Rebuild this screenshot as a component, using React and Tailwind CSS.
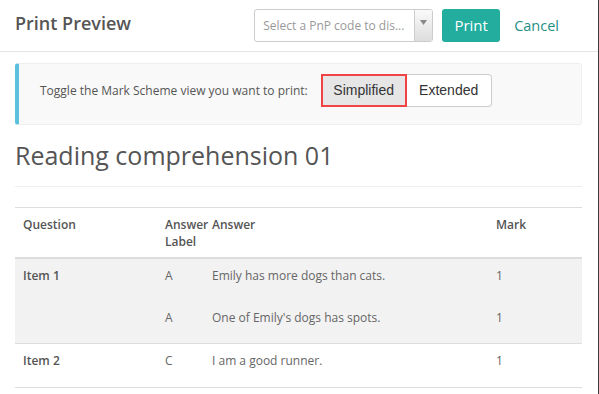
import React from 'react';

const rows = [
  { q: 'Item 1', answers: [{ label: 'A', text: 'Emily has more dogs than cats.', mark: '1' }, { label: 'A', text: "One of Emily's dogs has spots.", mark: '1' }], shaded: true },
  { q: 'Item 2', answers: [{ label: 'C', text: 'I am a good runner.', mark: '1' }], shaded: false },
];

const cols = 'grid grid-cols-[142px_47px_284px_95px]';

const App = () => {
  return (
    <div className="w-[599px] h-[394px] overflow-hidden bg-white border-r border-[#3a3a3a] text-[#555] font-['Open_Sans',sans-serif]">
      {/* Header */}
      <div className="h-[52px] border-b border-[#e5e5e5] flex items-center pl-[15px] pr-[39px]">
        <h1 className="text-[18px] font-semibold text-[#555] -mt-[4px]">Print Preview</h1>
        <div className="ml-auto flex items-center">
          <div className="w-[179px] h-[33px] border border-[#ccc] rounded-[3px] flex items-stretch overflow-hidden">
            <span className="flex-1 pl-[8px] text-[12px] text-[#999] flex items-center">Select a PnP code to dis...</span>
            <span className="w-[18px] border-l border-[#ccc] bg-gradient-to-b from-[#fafafa] to-[#ddd] flex items-start justify-center pt-[10px]">
              <svg width="7" height="5" viewBox="0 0 7 5"><path d="M0 0h7L3.5 5z" fill="#888" /></svg>
            </span>
          </div>
          <button className="ml-[9px] w-[58px] h-[33px] rounded-[3px] bg-[#22ad9e] text-white text-[15px]">Print</button>
          <button className="ml-[14px] text-[14.5px] text-[#1f8f85]">Cancel</button>
        </div>
      </div>

      <div className="px-[15px] pr-[16px]">
        {/* Toggle box */}
        <div className="mt-[11px] h-[62px] pb-[7px] bg-[#f9f9f9] border border-[#eee] border-l-[4px] border-l-[#5bc0de] rounded-[3px] flex items-center pl-[21px]">
          <span className="text-[12px] text-[#555]">Toggle the Mark Scheme view you want to print:</span>
          <div className="ml-[13px] flex font-['Liberation_Sans',Arial,sans-serif] text-[14px] text-[#333]">
            <button className="w-[86px] h-[33px] bg-[#e6e6e6] border-2 border-[#f04444]">Simplified</button>
            <button className="w-[85px] h-[33px] bg-white border border-l-0 border-[#ccc] rounded-r-[4px]">Extended</button>
          </div>
        </div>

        {/* Title */}
        <h2 className="mt-[13px] text-[25px] leading-[34px] text-[#555]">Reading comprehension 01</h2>
        <div className="mt-[14px] border-t border-[#eee]" />

        {/* Table */}
        <div className="mt-[20px] border-t border-[#ddd] text-[12px] leading-[17px]">
          <div className={`${cols} h-[51px] border-b-2 border-[#ddd] pt-[8px] font-semibold`}>
            <div className="pl-[8px]">Question</div>
            <div className="pl-[8px] whitespace-pre-line">{'Answer\nLabel'}</div>
            <div className="pl-[8px]">Answer</div>
            <div className="pl-[8px]">Mark</div>
          </div>
          {rows.map((r) => (
            <div key={r.q} className={`${r.shaded ? 'bg-[#f2f2f2]' : 'bg-white'} border-b border-[#ddd]`}>
              {r.answers.map((a, i) => (
                <div key={i} className={`${cols} ${r.shaded ? 'h-[42px]' : 'h-[43px]'} pt-[8px]`}>
                  <div className="pl-[8px] font-semibold">{i === 0 ? r.q : ''}</div>
                  <div className="pl-[8px] text-[#666]">{a.label}</div>
                  <div className="pl-[8px] text-[#666]">{a.text}</div>
                  <div className="pl-[8px] text-[#666]">{a.mark}</div>
                </div>
              ))}
            </div>
          ))}
        </div>
      </div>
    </div>
  );
};

export default App;
